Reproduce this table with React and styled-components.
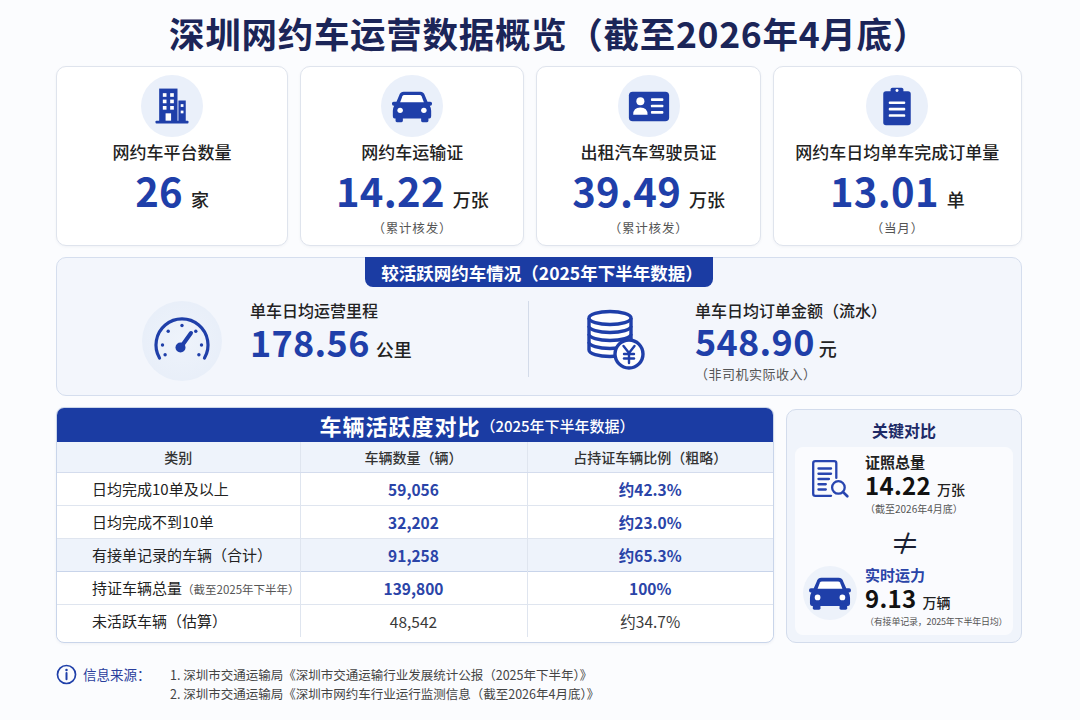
import styled, { createGlobalStyle } from "styled-components";

const BLUE = "#1f3fa9";

const GlobalStyle = createGlobalStyle`
  * { box-sizing: border-box; }
  body {
    margin: 0;
    background: #fbfcfe;
    font-family: "Noto Sans CJK SC", "Noto Sans", sans-serif;
    color: #222;
  }
`;

// ---------- icons ----------
function BuildingIcon() {
  return (
    <svg width="44" height="44" viewBox="0 0 48 48">
      <g fill={BLUE}>
        <rect x="10" y="5" width="20" height="36" />
        <rect x="31" y="18" width="8" height="23" />
        <rect x="6" y="40" width="36" height="3" rx="1" />
      </g>
      <g fill="#fff">
        <rect x="14" y="10" width="4" height="4" />
        <rect x="22" y="10" width="4" height="4" />
        <rect x="14" y="17" width="4" height="4" />
        <rect x="22" y="17" width="4" height="4" />
        <rect x="14" y="24" width="4" height="4" />
        <rect x="22" y="24" width="4" height="4" />
        <rect x="17" y="32" width="6" height="8" />
        <rect x="33.5" y="22" width="3" height="3" />
        <rect x="33.5" y="29" width="3" height="3" />
      </g>
    </svg>
  );
}

function CarIcon({ size = 44 }) {
  return (
    <svg width={size} height={size * 0.83} viewBox="0 0 48 40">
      <path
        fill={BLUE}
        d="M10 8 Q11 4 15 4 H33 Q37 4 38 8 L41 15 H44 Q46 15 46 17 Q46 19.5 44 19.5 H43.5 Q45 22 45 25 V31 Q45 33.5 43 33.5 H5 Q3 33.5 3 31 V25 Q3 22 4.5 19.5 H4 Q2 19.5 2 17 Q2 15 4 15 H7 Z"
      />
      <rect x="6" y="31" width="8" height="6.5" rx="1.5" fill={BLUE} />
      <rect x="34" y="31" width="8" height="6.5" rx="1.5" fill={BLUE} />
      <path fill="#fff" d="M13.5 9 Q14 7.8 15.6 7.8 H32.4 Q34 7.8 34.5 9 L37 15.5 H11 Z" />
      <circle cx="11" cy="24.5" r="3" fill="#fff" />
      <circle cx="37" cy="24.5" r="3" fill="#fff" />
    </svg>
  );
}

function IdCardIcon() {
  return (
    <svg width="46" height="46" viewBox="0 0 48 48">
      <rect x="3" y="9" width="42" height="31" rx="4" fill={BLUE} />
      <circle cx="15" cy="19" r="4.2" fill="#fff" />
      <path d="M7.5 33 Q7.5 25.5 15 25.5 Q22.5 25.5 22.5 33 Z" fill="#fff" />
      <rect x="26" y="16" width="13" height="2.8" rx="1" fill="#fff" />
      <rect x="26" y="22.6" width="13" height="2.8" rx="1" fill="#fff" />
      <rect x="26" y="29.2" width="13" height="2.8" rx="1" fill="#fff" />
    </svg>
  );
}

function ClipboardIcon() {
  return (
    <svg width="44" height="44" viewBox="0 0 48 48">
      <rect x="9" y="8" width="30" height="37" rx="3" fill={BLUE} />
      <rect x="17" y="4" width="14" height="8" rx="2" fill={BLUE} />
      <circle cx="24" cy="7" r="1.6" fill="#fff" />
      <rect x="15" y="19" width="18" height="2.8" rx="1" fill="#fff" />
      <rect x="15" y="26" width="18" height="2.8" rx="1" fill="#fff" />
      <rect x="15" y="33" width="18" height="2.8" rx="1" fill="#fff" />
    </svg>
  );
}

function GaugeIcon() {
  const dots = [210, 180, 135, 90, 45, 0, -30].map((a) => {
    const r = (a * Math.PI) / 180;
    return [32 + 19.5 * Math.cos(r), 36 - 19.5 * Math.sin(r)];
  });
  return (
    <svg width="64" height="64" viewBox="0 0 64 64">
      <path
        d="M9.5 49 A26 26 0 1 1 54.5 49"
        fill="none"
        stroke={BLUE}
        strokeWidth="3.2"
        strokeLinecap="round"
      />
      {dots.map(([x, y], i) => (
        <circle key={i} cx={x} cy={y} r="1.7" fill={BLUE} />
      ))}
      <line x1="31" y1="38" x2="41" y2="24" stroke={BLUE} strokeWidth="4" strokeLinecap="round" />
      <circle cx="30.5" cy="38.5" r="5" fill={BLUE} />
    </svg>
  );
}

function CoinsIcon() {
  const layers = [4, 3, 2, 1];
  return (
    <svg width="64" height="64" viewBox="0 0 64 64">
      <g fill="#fff" stroke={BLUE} strokeWidth="3.4" strokeLinejoin="round">
        {layers.map((k) => {
          const y0 = 9 + 8 * (k - 1);
          const y1 = 9 + 8 * k;
          return <path key={k} d={`M4 ${y0} V${y1} A21 6.5 0 0 0 46 ${y1} V${y0}`} />;
        })}
        <ellipse cx="25" cy="9" rx="21" ry="6.5" />
        <circle cx="44" cy="45" r="14" />
      </g>
      <g fill="none" stroke={BLUE} strokeWidth="2.4" strokeLinecap="round" strokeLinejoin="round">
        <path d="M38.5 37 L44 44 L49.5 37" />
        <path d="M44 44 V54" />
        <path d="M39 45 H49" />
        <path d="M39 49.5 H49" />
      </g>
    </svg>
  );
}

function DocSearchIcon() {
  return (
    <svg width="42" height="42" viewBox="0 0 40 40">
      <g fill="none" stroke="#2845b0" strokeWidth="2.2" strokeLinecap="round">
        <path d="M21 36 H6 Q4 36 4 34 V5 Q4 3 6 3 H24 Q26 3 26 5 V19" />
        <path d="M9 10 H21 M9 15 H21 M9 20 H19 M9 25 H16 M9 30 H16" />
        <circle cx="28" cy="28" r="6" />
        <path d="M32.5 32.5 L36.5 36.5" strokeWidth="2.6" />
      </g>
    </svg>
  );
}

function InfoIcon() {
  return (
    <svg width="21" height="21" viewBox="0 0 20 20">
      <circle cx="10" cy="10" r="8.6" fill="none" stroke={BLUE} strokeWidth="1.6" />
      <circle cx="10" cy="5.8" r="1.2" fill={BLUE} />
      <path d="M10 8.6 V14.6" stroke={BLUE} strokeWidth="1.9" strokeLinecap="round" />
    </svg>
  );
}

// ---------- data ----------
const stats = [
  { Icon: BuildingIcon, label: "网约车平台数量", value: "26", unit: "家" },
  { Icon: CarIcon, label: "网约车运输证", value: "14.22", unit: "万张", sub: "（累计核发）" },
  { Icon: IdCardIcon, label: "出租汽车驾驶员证", value: "39.49", unit: "万张", sub: "（累计核发）" },
  { Icon: ClipboardIcon, label: "网约车日均单车完成订单量", value: "13.01", unit: "单", sub: "（当月）" },
];

const rows = [
  { name: "日均完成10单及以上", count: "59,056", ratio: "约42.3%" },
  { name: "日均完成不到10单", count: "32,202", ratio: "约23.0%" },
  { name: "有接单记录的车辆（合计）", count: "91,258", ratio: "约65.3%", highlight: true },
  { name: "持证车辆总量", note: "（截至2025年下半年）", count: "139,800", ratio: "100%" },
  { name: "未活跃车辆（估算）", count: "48,542", ratio: "约34.7%", muted: true },
];

// ---------- layout ----------
const Page = styled.div`
  width: 1080px;
  height: 720px;
  padding: 10px 58px 0 56px;
  display: flex;
  flex-direction: column;
`;

const Title = styled.h1`
  margin: 0;
  padding-left: 20px;
  font-size: 35.5px;
  line-height: 46px;
  font-weight: 700;
  color: #1b2558;
  text-align: center;
  letter-spacing: 0.7px;
  white-space: nowrap;
`;

const CardGrid = styled.div`
  margin-top: 10px;
  height: 180px;
  display: grid;
  grid-template-columns: 232fr 224fr 224fr 249fr;
  gap: 12px;
`;

const StatCard = styled.div`
  background: #fff;
  border: 1px solid #dfe4ed;
  border-radius: 10px;
  box-shadow: 0 1px 3px rgba(30, 50, 100, 0.05);
  display: flex;
  flex-direction: column;
  align-items: center;
  padding-top: 8px;
`;

const IconCircle = styled.div`
  width: ${(p) => p.size || 62}px;
  height: ${(p) => p.size || 62}px;
  border-radius: 50%;
  background: ${(p) => p.bg || "#eaf0fa"};
  display: flex;
  align-items: center;
  justify-content: center;
  flex-shrink: 0;
`;

const StatLabel = styled.div`
  margin-top: 4px;
  font-size: 17px;
  line-height: 22px;
  font-weight: 500;
  color: #222;
  white-space: nowrap;
`;

const ValueRow = styled.div`
  display: flex;
  align-items: baseline;
  gap: ${(p) => p.gap || 8}px;
  margin-top: ${(p) => p.mt || 0}px;
  white-space: nowrap;
`;

const BigValue = styled.span`
  font-size: ${(p) => p.size || 40}px;
  line-height: ${(p) => p.lh || (p.size || 40) + 4}px;
  font-weight: 700;
  color: ${(p) => p.color || BLUE};
  letter-spacing: 0.3px;
`;

const Unit = styled.span`
  font-size: ${(p) => p.size || 18}px;
  font-weight: 500;
  color: #222;
`;

const SubNote = styled.div`
  margin-top: ${(p) => p.mt || 0}px;
  font-size: ${(p) => p.size || 12}px;
  line-height: ${(p) => (p.size || 12) + 4}px;
  letter-spacing: ${(p) => p.ls || 0}px;
  color: #555;
  white-space: nowrap;
`;

const ActiveBox = styled.section`
  margin-top: 11px;
  height: 139px;
  border: 1px solid #d5deee;
  border-radius: 10px;
  background: #f3f6fc;
  display: flex;
  flex-direction: column;
  align-items: center;
`;

const Tab = styled.div`
  margin-top: -1px;
  height: 30px;
  padding: 0 10px 0 16px;
  display: flex;
  align-items: center;
  background: #1b3ca3;
  color: #fff;
  font-size: 17.5px;
  font-weight: 700;
  border-radius: 0 0 8px 8px;
`;

const ActiveRow = styled.div`
  flex: 1;
  align-self: stretch;
  display: flex;
  align-items: center;
`;

const Half = styled.div`
  flex: ${(p) => (p.w ? `0 0 ${p.w}px` : 1)};
  height: 100%;
  display: flex;
  align-items: center;
  padding-left: ${(p) => p.pl}px;
  gap: ${(p) => p.gap}px;
`;

const HalfText = styled.div`
  align-self: flex-start;
  margin-top: 12px;
  display: flex;
  flex-direction: column;
`;

const HalfLabel = styled.div`
  font-size: 16px;
  line-height: 22px;
  font-weight: 500;
  color: #222;
`;

const Divider = styled.div`
  width: 1px;
  height: 76px;
  background: #d3dbe9;
  margin-bottom: 4px;
`;

const Bottom = styled.div`
  margin-top: 11px;
  height: 236px;
  display: grid;
  grid-template-columns: 718px 1fr;
  gap: 12px;
`;

const TableCard = styled.div`
  border: 1px solid #c9d5ea;
  border-radius: 8px;
  overflow: hidden;
  background: #fff;
  box-shadow: 0 1px 3px rgba(30, 50, 100, 0.06);
`;

const TableBar = styled.div`
  height: 34px;
  background: #1b3ca3;
  color: #fff;
  display: flex;
  align-items: center;
  justify-content: center;
  padding-left: 124px;
`;

const BarTitle = styled.span`
  font-size: 22px;
  font-weight: 700;
  letter-spacing: 1px;
`;

const BarSub = styled.span`
  font-size: 15px;
  font-weight: 500;
`;

const Table = styled.table`
  width: 100%;
  border-collapse: collapse;
  table-layout: fixed;
`;

const Th = styled.th`
  height: 30px;
  background: #eef3fb;
  font-size: 14px;
  font-weight: 500;
  color: #333;
  border-bottom: 1px solid #d4dced;
  border-left: 1px solid #dfe5ef;
  &:first-child { border-left: none; }
`;

const Tr = styled.tr`
  background: ${(p) => (p.highlight ? "#eef3fb" : "#fff")};
  border-top: 1px solid ${(p) => (p.highlight ? "#c8d4ea" : "#dfe5ef")};
  border-bottom: 1px solid ${(p) => (p.highlight ? "#c8d4ea" : "#dfe5ef")};
  &:last-child { border-bottom: none; }
`;

const Td = styled.td`
  height: 33px;
  padding: 0;
  white-space: nowrap;
  font-size: ${(p) => (p.num ? 15.5 : 15)}px;
  font-weight: ${(p) => (p.num && !p.muted ? 600 : 400)};
  color: ${(p) => (p.num ? (p.muted ? "#3a3a3a" : "#2a44a8") : "#222")};
  text-align: ${(p) => (p.num ? "center" : "left")};
  padding-left: ${(p) => (p.num ? 0 : 35)}px;
  border-left: 1px solid #dfe5ef;
  &:first-child { border-left: none; }
`;

const Note = styled.span`
  font-size: 11.5px;
  color: #555;
`;

const KeyPanel = styled.aside`
  margin-top: 2px;
  border: 1px solid #d3dcec;
  border-radius: 10px;
  background: #f0f4fb;
  display: flex;
  flex-direction: column;
`;

const KeyTitle = styled.div`
  padding: 10px 0 7px;
  text-align: center;
  font-size: 16px;
  line-height: 20px;
  font-weight: 700;
  color: #1d2a66;
`;

const KeyInner = styled.div`
  flex: 1;
  margin: 0 8px 7px;
  border-radius: 8px;
  background: #fafbfe;
  padding: 6px 0 0 12px;
  display: flex;
  flex-direction: column;
`;

const KeyRow = styled.div`
  display: flex;
  align-items: flex-start;
  gap: 12px;
`;

const KeyIconBox = styled.div`
  width: 46px;
  display: flex;
  justify-content: center;
  padding-top: ${(p) => p.pt || 0}px;
`;

const KeyLabel = styled.div`
  font-size: 15px;
  line-height: 18px;
  font-weight: 700;
  color: ${(p) => p.color || "#222"};
`;

const NotEqual = styled.div`
  margin: 10px 0 10px;
  text-align: center;
  font-size: 30px;
  line-height: 30px;
  color: #1a1f33;
  padding-right: 10px;
`;

const Footer = styled.footer`
  margin-top: 21px;
  display: flex;
  align-items: flex-start;
`;

const SourceLabel = styled.div`
  width: 93px;
  padding-left: 6px;
  font-size: 13.5px;
  line-height: 21px;
  color: #2a3e9c;
`;

const SourceList = styled.div`
  display: flex;
  flex-direction: column;
  font-size: 12.5px;
  line-height: 19px;
  color: #444;
  padding-top: 1px;
`;

export default function App() {
  return (
    <Page>
      <GlobalStyle />
      <Title>深圳网约车运营数据概览（截至2026年4月底）</Title>

      <CardGrid>
        {stats.map(({ Icon, label, value, unit, sub }) => (
          <StatCard key={label}>
            <IconCircle>
              <Icon />
            </IconCircle>
            <StatLabel>{label}</StatLabel>
            <ValueRow mt={7}>
              <BigValue lh={40}>{value}</BigValue>
              <Unit>{unit}</Unit>
            </ValueRow>
            {sub && (
              <SubNote mt={8} size={12.5} ls={0.8}>
                {sub}
              </SubNote>
            )}
          </StatCard>
        ))}
      </CardGrid>

      <ActiveBox>
        <Tab>较活跃网约车情况（2025年下半年数据）</Tab>
        <ActiveRow>
          <Half w={471} pl={85} gap={28}>
            <IconCircle size={80} bg="radial-gradient(circle, #eef3fb 0%, #e6edf8 100%)">
              <GaugeIcon />
            </IconCircle>
            <HalfText>
              <HalfLabel>单车日均运营里程</HalfLabel>
              <ValueRow gap={6}>
                <BigValue size={36}>178.56</BigValue>
                <Unit>公里</Unit>
              </ValueRow>
            </HalfText>
          </Half>
          <Divider />
          <Half pl={48} gap={38}>
            <IconCircle size={80} bg="transparent">
              <CoinsIcon />
            </IconCircle>
            <HalfText>
              <HalfLabel>单车日均订单金额（流水）</HalfLabel>
              <ValueRow gap={4}>
                <BigValue size={36} lh={38}>548.90</BigValue>
                <Unit>元</Unit>
              </ValueRow>
              <SubNote mt={4} size={13} ls={0.5}>（非司机实际收入）</SubNote>
            </HalfText>
          </Half>
        </ActiveRow>
      </ActiveBox>

      <Bottom>
        <TableCard>
          <TableBar>
            <BarTitle>车辆活跃度对比</BarTitle>
            <BarSub>（2025年下半年数据）</BarSub>
          </TableBar>
          <Table>
            <colgroup>
              <col style={{ width: 243 }} />
              <col style={{ width: 227 }} />
              <col />
            </colgroup>
            <thead>
              <tr>
                <Th>类别</Th>
                <Th>车辆数量（辆）</Th>
                <Th>占持证车辆比例（粗略）</Th>
              </tr>
            </thead>
            <tbody>
              {rows.map((r) => (
                <Tr key={r.name} highlight={r.highlight}>
                  <Td>
                    {r.name}
                    {r.note && <Note>{r.note}</Note>}
                  </Td>
                  <Td num muted={r.muted}>{r.count}</Td>
                  <Td num muted={r.muted}>{r.ratio}</Td>
                </Tr>
              ))}
            </tbody>
          </Table>
        </TableCard>

        <KeyPanel>
          <KeyTitle>关键对比</KeyTitle>
          <KeyInner>
            <KeyRow>
              <KeyIconBox pt={5}>
                <DocSearchIcon />
              </KeyIconBox>
              <div>
                <KeyLabel>证照总量</KeyLabel>
                <ValueRow gap={6}>
                  <BigValue size={24} lh={28} color="#111">14.22</BigValue>
                  <Unit size={14}>万张</Unit>
                </ValueRow>
                <SubNote mt={3} size={10}>（截至2026年4月底）</SubNote>
              </div>
            </KeyRow>
            <NotEqual>≠</NotEqual>
            <KeyRow>
              <KeyIconBox>
                <IconCircle size={54} bg="#edf2fa">
                  <CarIcon size={46} />
                </IconCircle>
              </KeyIconBox>
              <div>
                <KeyLabel color="#2a44a8">实时运力</KeyLabel>
                <ValueRow gap={6}>
                  <BigValue size={24} lh={28} color="#111">9.13</BigValue>
                  <Unit size={14}>万辆</Unit>
                </ValueRow>
                <SubNote mt={3} size={9} ls={-0.2}>（有接单记录，2025年下半年日均）</SubNote>
              </div>
            </KeyRow>
          </KeyInner>
        </KeyPanel>
      </Bottom>

      <Footer>
        <InfoIcon />
        <SourceLabel>信息来源：</SourceLabel>
        <SourceList>
          <span>1. 深圳市交通运输局《深圳市交通运输行业发展统计公报（2025年下半年）》</span>
          <span>2. 深圳市交通运输局《深圳市网约车行业运行监测信息（截至2026年4月底）》</span>
        </SourceList>
      </Footer>
    </Page>
  );
}
